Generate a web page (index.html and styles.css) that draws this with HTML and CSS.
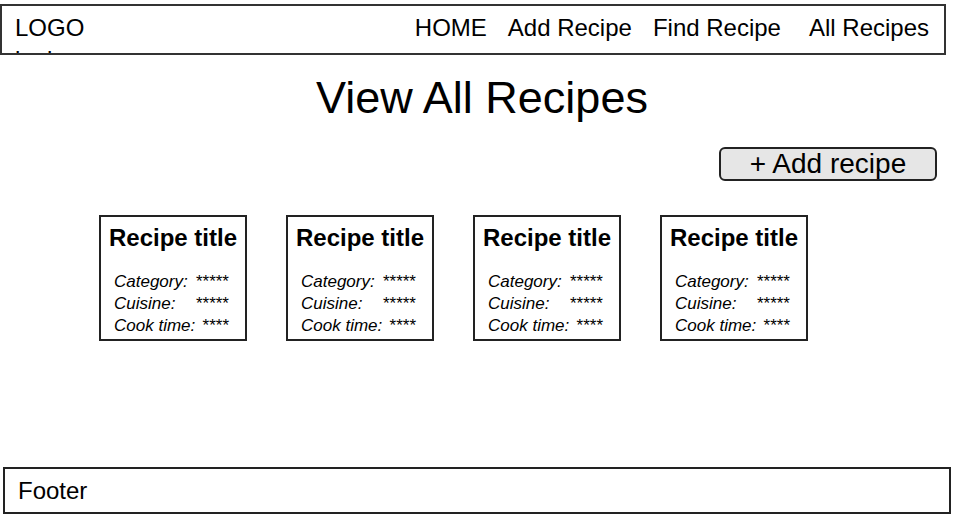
FILE: index.html
```html
<!DOCTYPE html>
<html lang="en">
<head>
    <meta charset="UTF-8">
    <meta name="viewport" content="width=device-width, initial-scale=1.0">
    <title>View All Recipes</title>
    <link rel="stylesheet" href="styles.css">
</head>
<body>
    <header class="site-header">
        <div class="logo">
            <div>LOGO</div>
            <div class="logo-sub">look</div>
        </div>
        <nav class="nav">
            <a href="#">HOME</a>
            <a href="#">Add Recipe</a>
            <a href="#">Find Recipe</a>
            <a href="#" class="nav-last">All Recipes</a>
        </nav>
    </header>

    <main class="content">
        <h1 class="page-title">View All Recipes</h1>
        <div class="actions">
            <button class="add-button">+ Add recipe</button>
        </div>
        <div class="cards">
            <div class="card">
                <h2>Recipe title</h2>
                <div class="row"><span>Category:</span><span class="val">*****</span></div>
                <div class="row"><span>Cuisine:</span><span class="val">*****</span></div>
                <div class="row"><span>Cook time:</span><span class="val">****</span></div>
            </div>
            <div class="card">
                <h2>Recipe title</h2>
                <div class="row"><span>Category:</span><span class="val">*****</span></div>
                <div class="row"><span>Cuisine:</span><span class="val">*****</span></div>
                <div class="row"><span>Cook time:</span><span class="val">****</span></div>
            </div>
            <div class="card">
                <h2>Recipe title</h2>
                <div class="row"><span>Category:</span><span class="val">*****</span></div>
                <div class="row"><span>Cuisine:</span><span class="val">*****</span></div>
                <div class="row"><span>Cook time:</span><span class="val">****</span></div>
            </div>
            <div class="card">
                <h2>Recipe title</h2>
                <div class="row"><span>Category:</span><span class="val">*****</span></div>
                <div class="row"><span>Cuisine:</span><span class="val">*****</span></div>
                <div class="row"><span>Cook time:</span><span class="val">****</span></div>
            </div>
        </div>
    </main>

    <footer class="site-footer">Footer</footer>
</body>
</html>
```

FILE: styles.css
```css
* {
    box-sizing: border-box;
}
body {
    font-family: "Liberation Sans", Arial, sans-serif;
    color: #000;
    background-color: #fff;
    margin: 0;
    min-height: 100vh;
    display: flex;
    flex-direction: column;
}
.site-header {
    display: flex;
    justify-content: space-between;
    align-items: flex-start;
    height: 51px;
    width: 946px;
    margin-top: 4px;
    border: 2px solid #333;
    padding: 8px 15px 0 13px;
    overflow: hidden;
    font-size: 24px;
}
.logo-sub {
    margin-top: 4px;
}
.nav {
    display: flex;
    gap: 21px;
}
.nav a {
    color: #000;
    text-decoration: none;
}
.nav .nav-last {
    margin-left: 7px;
}
.content {
    display: flex;
    flex-direction: column;
}
.page-title {
    font-size: 45px;
    font-weight: normal;
    text-align: center;
    margin: 17px 0 0;
    padding-left: 10px;
}
.actions {
    display: flex;
    justify-content: flex-end;
    margin-top: 23px;
    padding-right: 17px;
}
.add-button {
    width: 218px;
    height: 34px;
    padding: 0;
    font-family: inherit;
    font-size: 28px;
    line-height: 30px;
    color: #000;
    background-color: #e6e6e6;
    border: 2px solid #222;
    border-radius: 6px;
}
.cards {
    display: flex;
    gap: 39px;
    margin-top: 34px;
    padding-left: 99px;
}
.card {
    width: 148px;
    height: 126px;
    border: 2px solid #222;
    padding: 7px 16px 5px 13px;
}
.card h2 {
    font-size: 24px;
    line-height: 28px;
    text-align: center;
    margin: 0 -10px 19px -7px;
}
.row {
    display: flex;
    justify-content: space-between;
    font-size: 17px;
    font-style: italic;
    line-height: 22px;
}
.val {
    font-style: normal;
}
.site-footer {
    margin: auto 3px 1px 3px;
    height: 47px;
    border: 2px solid #222;
    display: flex;
    align-items: center;
    padding-left: 13px;
    font-size: 24px;
}
```
